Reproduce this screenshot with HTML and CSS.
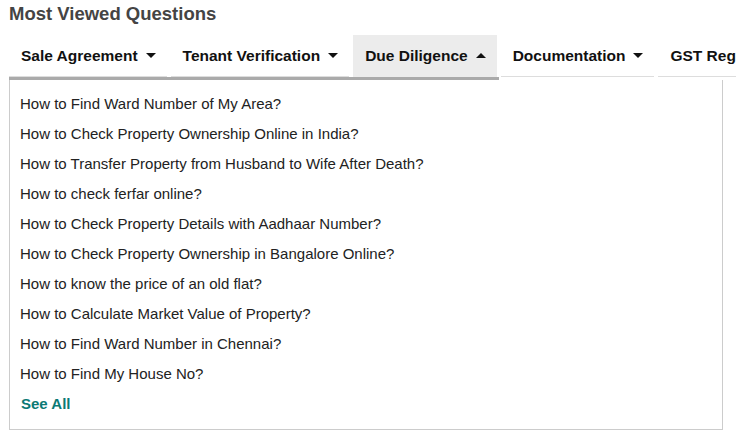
FILE: index.html
```html
<!DOCTYPE html>
<html lang="en">
<head>
<meta charset="utf-8">
<title>Most Viewed Questions</title>
<link rel="stylesheet" href="styles.css">
</head>
<body>
<div class="wrap">
  <h2 class="title">Most Viewed Questions</h2>
  <div class="tabs">
    <div class="tab"><span>Sale Agreement</span><i class="caret down"></i></div>
    <div class="tab"><span>Tenant Verification</span><i class="caret down"></i></div>
    <div class="tab active"><span>Due Diligence</span><i class="caret up"></i></div>
    <div class="tab"><span>Documentation</span><i class="caret down"></i></div>
    <div class="tab"><span>GST Registration</span><i class="caret down"></i></div>
  </div>
  <div class="scrollbar"><div class="thumb"></div></div>
  <div class="panel">
    <ul class="list">
      <li><a href="#">How to Find Ward Number of My Area?</a></li>
      <li><a href="#">How to Check Property Ownership Online in India?</a></li>
      <li><a href="#">How to Transfer Property from Husband to Wife After Death?</a></li>
      <li><a href="#">How to check ferfar online?</a></li>
      <li><a href="#">How to Check Property Details with Aadhaar Number?</a></li>
      <li><a href="#">How to Check Property Ownership in Bangalore Online?</a></li>
      <li><a href="#">How to know the price of an old flat?</a></li>
      <li><a href="#">How to Calculate Market Value of Property?</a></li>
      <li><a href="#">How to Find Ward Number in Chennai?</a></li>
      <li><a href="#">How to Find My House No?</a></li>
    </ul>
    <a class="see-all" href="#">See All</a>
  </div>
</div>
</body>
</html>
```

FILE: styles.css
```css
html, body {
  margin: 0;
  padding: 0;
  background: #fff;
  overflow: hidden;
}
body {
  font-family: "Liberation Sans", Arial, sans-serif;
  width: 736px;
  height: 433px;
}
.wrap {
  padding-left: 9px;
}
.title {
  margin: 0;
  padding-top: 3px;
  font-size: 18.5px;
  line-height: 22px;
  font-weight: bold;
  color: #444;
}
.tabs {
  display: flex;
  gap: 4px;
  margin-top: 10px;
  white-space: nowrap;
  overflow: hidden;
}
.tab {
  flex: none;
  display: flex;
  align-items: center;
  gap: 8px;
  height: 41px;
  padding: 0 11px 0 12px;
  border-bottom: 1px solid #ddd;
  font-size: 15.5px;
  font-weight: bold;
  color: #111;
}
.tab.active {
  background: #ececec;
  border-bottom-color: #ececec;
}
.caret {
  width: 0;
  height: 0;
  border-left: 5px solid transparent;
  border-right: 5px solid transparent;
}
.caret.down {
  border-top: 5px solid #111;
}
.caret.up {
  border-bottom: 5px solid #111;
}
.scrollbar {
  height: 3px;
}
.thumb {
  width: 490px;
  height: 3px;
  background: #aaa;
}
.panel {
  width: 712px;
  box-sizing: content-box;
  border: 1px solid #ccc;
  border-top: none;
  padding: 9px 0 10px;
}
.list {
  list-style: none;
  margin: 0;
  padding: 0;
}
.list li {
  line-height: 30px;
  padding-left: 10px;
}
.list a {
  color: #222;
  font-size: 15px;
  text-decoration: none;
}
.see-all {
  display: block;
  padding-left: 11px;
  line-height: 30px;
  font-size: 15px;
  font-weight: bold;
  color: #0b7a75;
  text-decoration: none;
}
```
